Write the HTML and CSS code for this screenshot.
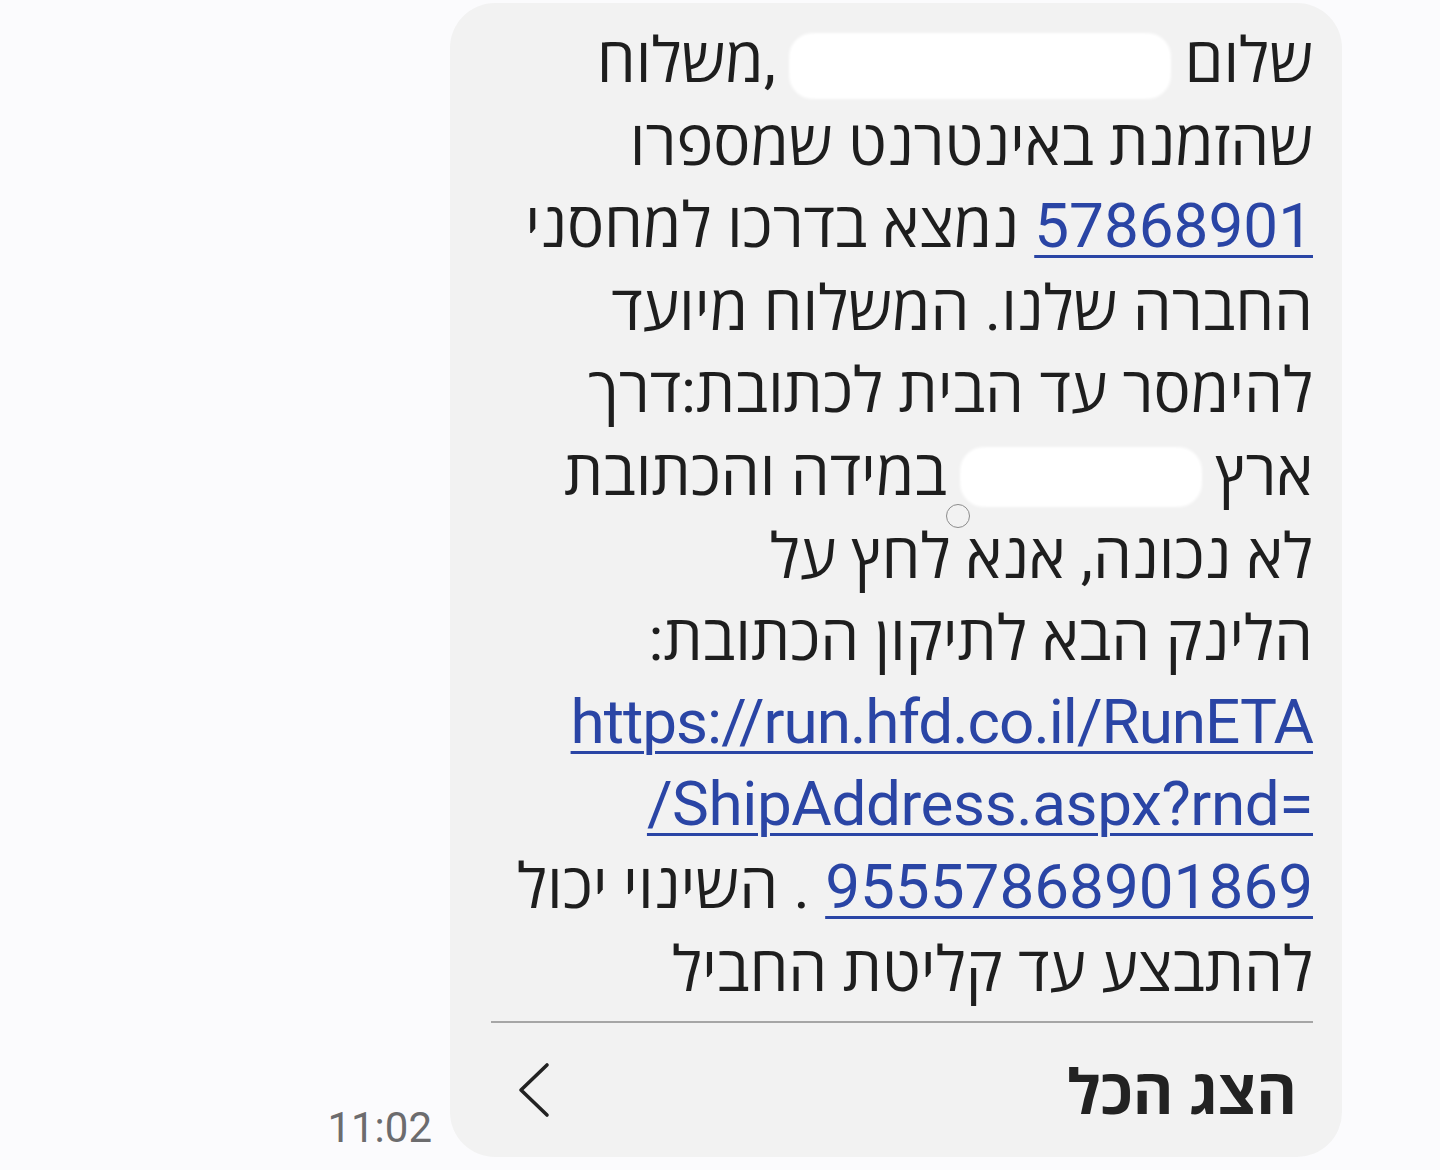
FILE: index.html
```html
<!DOCTYPE html>
<html lang="he">
<head>
<meta charset="utf-8">
<title>הודעה</title>
<link rel="stylesheet" href="styles.css">
</head>
<body>
<div class="thread">
  <div class="time">11:02</div>
  <div class="bubble" dir="rtl">
    <div class="body">
      <div class="line">שלום <span class="redact redact-name"></span> ,משלוח</div>
      <div class="line">שהזמנת באינטרנט שמספרו</div>
      <div class="line"><a class="link" href="#">57868901</a> נמצא בדרכו למחסני</div>
      <div class="line">החברה שלנו. המשלוח מיועד</div>
      <div class="line">להימסר עד הבית לכתובת:דרך</div>
      <div class="line">ארץ <span class="redact redact-street"></span> במידה והכתובת</div>
      <div class="line">לא נכונה, אנא לחץ על</div>
      <div class="line">הלינק הבא לתיקון הכתובת:</div>
      <div class="line"><a class="link link-url-a" dir="ltr" href="#">https://run.hfd.co.il/RunETA</a></div>
      <div class="line"><a class="link link-url-b" dir="ltr" href="#">/ShipAddress.aspx?rnd=</a></div>
      <div class="line"><a class="link" href="#">95557868901869</a> . השינוי יכול</div>
      <div class="line">להתבצע עד קליטת החביל</div>
    </div>
    <div class="footer">
      <span class="show-all">הצג הכל</span>
      <svg class="chevron" width="34" height="56" viewBox="0 0 34 56" aria-hidden="true">
        <polyline points="30,3 4,28 30,53" fill="none" stroke="#222" stroke-width="3.6" stroke-linecap="round" stroke-linejoin="round"/>
      </svg>
    </div>
    <span class="touch-ring"></span>
  </div>
</div>
</body>
</html>
```

FILE: styles.css
```css
html, body {
  margin: 0;
  padding: 0;
  background: #fbfbfd;
}

body {
  font-family: Roboto, "Open Sans", "Noto Sans", "Liberation Sans", sans-serif;
  color: #1e1e1e;
}

.thread {
  display: flex;
  justify-content: flex-end;
  align-items: flex-end;
  gap: 18px;
  padding: 3px 98px 0 0;
  height: 1167px;
  box-sizing: border-box;
}

.time {
  font-family: Roboto, "Liberation Sans", sans-serif;
  font-size: 42px;
  color: #6c6c6e;
  line-height: 1;
  margin-bottom: 18px;
}

.bubble {
  position: relative;
  width: 892px;
  box-sizing: border-box;
  background: #f2f2f2;
  border-radius: 45px;
  padding: 17px 29px 0 41px;
  align-self: flex-start;
  height: 1154px;
  display: flex;
  flex-direction: column;
}

.body {
  font-size: 62px;
  line-height: 82.6px;
  text-align: right;
}

.line {
  white-space: nowrap;
}

.link {
  color: #2a45a5;
  text-decoration: underline;
  text-decoration-thickness: 3px;
  text-underline-offset: 8px;
}

.link-url-a {
  letter-spacing: -1px;
}

.link-url-b {
  letter-spacing: -0.4px;
}

.redact {
  display: inline-block;
  background: #ffffff;
  border-radius: 22px;
  box-shadow: 0 0 3px 2px #ffffff;
}

.redact-name {
  width: 378px;
  height: 62px;
  vertical-align: -15px;
}

.redact-street {
  width: 238px;
  height: 56px;
  vertical-align: -10px;
}

.footer {
  margin-top: 10px;
  border-top: 2px solid #a6a6a6;
  flex: 1;
  display: flex;
  align-items: center;
  justify-content: space-between;
  padding: 0 16px 0 26px;
}

.show-all {
  font-weight: 700;
  font-size: 62px;
  line-height: 1;
  color: #222;
  margin-top: 6px;
}

.chevron {
  display: block;
}

.touch-ring {
  position: absolute;
  left: 496px;
  top: 501px;
  width: 22px;
  height: 22px;
  border: 1.5px solid #8c8c8c;
  border-radius: 50%;
}
```
